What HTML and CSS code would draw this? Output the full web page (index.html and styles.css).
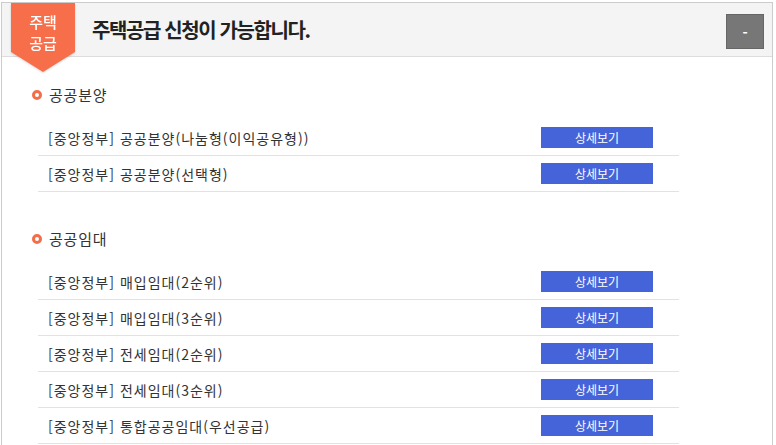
FILE: index.html
```html
<!DOCTYPE html>
<html lang="ko">
<head>
    <meta charset="UTF-8">
    <meta name="viewport" content="width=device-width, initial-scale=1.0">
    <title>주택공급</title>
    <link rel="stylesheet" href="styles.css">
</head>
<body>
    <div class="panel">
        <div class="panel-head">
            <div class="ribbon-wrap">
                <div class="ribbon">주택<br>공급</div>
            </div>
            <h1 class="panel-title">주택공급 신청이 가능합니다.</h1>
            <button class="toggle-btn" type="button">-</button>
        </div>

        <div class="panel-body">
            <!-- 공공분양 -->
            <div class="section">
                <h2 class="section-title"><span class="dot"></span>공공분양</h2>
                <ul class="item-list">
                    <li class="item">
                        <span class="item-name">[중앙정부] 공공분양(나눔형(이익공유형))</span>
                        <a class="detail-btn" href="#">상세보기</a>
                    </li>
                    <li class="item">
                        <span class="item-name">[중앙정부] 공공분양(선택형)</span>
                        <a class="detail-btn" href="#">상세보기</a>
                    </li>
                </ul>
            </div>

            <!-- 공공임대 -->
            <div class="section">
                <h2 class="section-title"><span class="dot"></span>공공임대</h2>
                <ul class="item-list">
                    <li class="item">
                        <span class="item-name">[중앙정부] 매입임대(2순위)</span>
                        <a class="detail-btn" href="#">상세보기</a>
                    </li>
                    <li class="item">
                        <span class="item-name">[중앙정부] 매입임대(3순위)</span>
                        <a class="detail-btn" href="#">상세보기</a>
                    </li>
                    <li class="item">
                        <span class="item-name">[중앙정부] 전세임대(2순위)</span>
                        <a class="detail-btn" href="#">상세보기</a>
                    </li>
                    <li class="item">
                        <span class="item-name">[중앙정부] 전세임대(3순위)</span>
                        <a class="detail-btn" href="#">상세보기</a>
                    </li>
                    <li class="item">
                        <span class="item-name">[중앙정부] 통합공공임대(우선공급)</span>
                        <a class="detail-btn" href="#">상세보기</a>
                    </li>
                </ul>
            </div>
        </div>
    </div>
</body>
</html>
```

FILE: styles.css
```css
body {
    margin: 0;
    padding: 0;
    font-family: "Noto Sans CJK KR", "Noto Sans", sans-serif;
    color: #333;
    background-color: #fff;
}

.panel {
    width: 772px;
    margin: 2px 0 0 1px;
    border: 1px solid #ccc;
    border-bottom: none;
    box-sizing: border-box;
    min-height: 460px;
}

.panel-head {
    position: relative;
    height: 53px;
    background-color: #f4f4f4;
    border-bottom: 1px solid #ddd;
    display: flex;
    align-items: center;
}

.ribbon-wrap {
    position: absolute;
    left: 9px;
    top: 0;
    filter: drop-shadow(0 1px 1px rgba(0, 0, 0, 0.15));
    z-index: 2;
}

.ribbon {
    width: 64px;
    height: 69px;
    box-sizing: border-box;
    padding-top: 8px;
    background-color: #f76e4a;
    clip-path: polygon(0 0, 100% 0, 100% 49px, 50% 100%, 0 49px);
    color: #fff;
    font-size: 15px;
    line-height: 21px;
    font-weight: 500;
    text-align: center;
}

.panel-title {
    margin: 0 0 0 90px;
    font-size: 20px;
    font-weight: 700;
    letter-spacing: -1.4px;
    color: #222;
    line-height: 26px;
    flex: 1;
}

.toggle-btn {
    width: 38px;
    height: 35px;
    margin-right: 8px;
    margin-top: 4px;
    background-color: #777;
    border: 1px solid #666;
    color: #fff;
    font-family: "Noto Sans CJK KR", sans-serif;
    font-size: 14px;
    font-weight: 700;
    line-height: 1;
    padding: 0;
    cursor: pointer;
}

.panel-body {
    padding-top: 28px;
}

.section {
    margin-bottom: 37px;
}

.section-title {
    display: flex;
    align-items: center;
    margin: 0 0 15px 30px;
    height: 20px;
    font-size: 15px;
    font-weight: 400;
    letter-spacing: 0.8px;
    line-height: 20px;
    color: #333;
}

.dot {
    width: 10px;
    height: 10px;
    box-sizing: border-box;
    border: 3px solid #f26d4a;
    border-radius: 50%;
    margin-right: 7px;
}

.item-list {
    list-style: none;
    margin: 0 0 0 36px;
    padding: 0;
    width: 641px;
}

.item {
    display: flex;
    align-items: center;
    justify-content: space-between;
    height: 35px;
    border-bottom: 1px solid #e2e2e2;
    padding-left: 10px;
}

.item-name {
    font-size: 14px;
    letter-spacing: 1px;
    color: #333;
}

.detail-btn {
    display: block;
    width: 112px;
    height: 21px;
    margin-right: 26px;
    background-color: #4664d9;
    color: #fff;
    font-size: 12px;
    line-height: 21px;
    text-align: center;
    text-decoration: none;
}
```
